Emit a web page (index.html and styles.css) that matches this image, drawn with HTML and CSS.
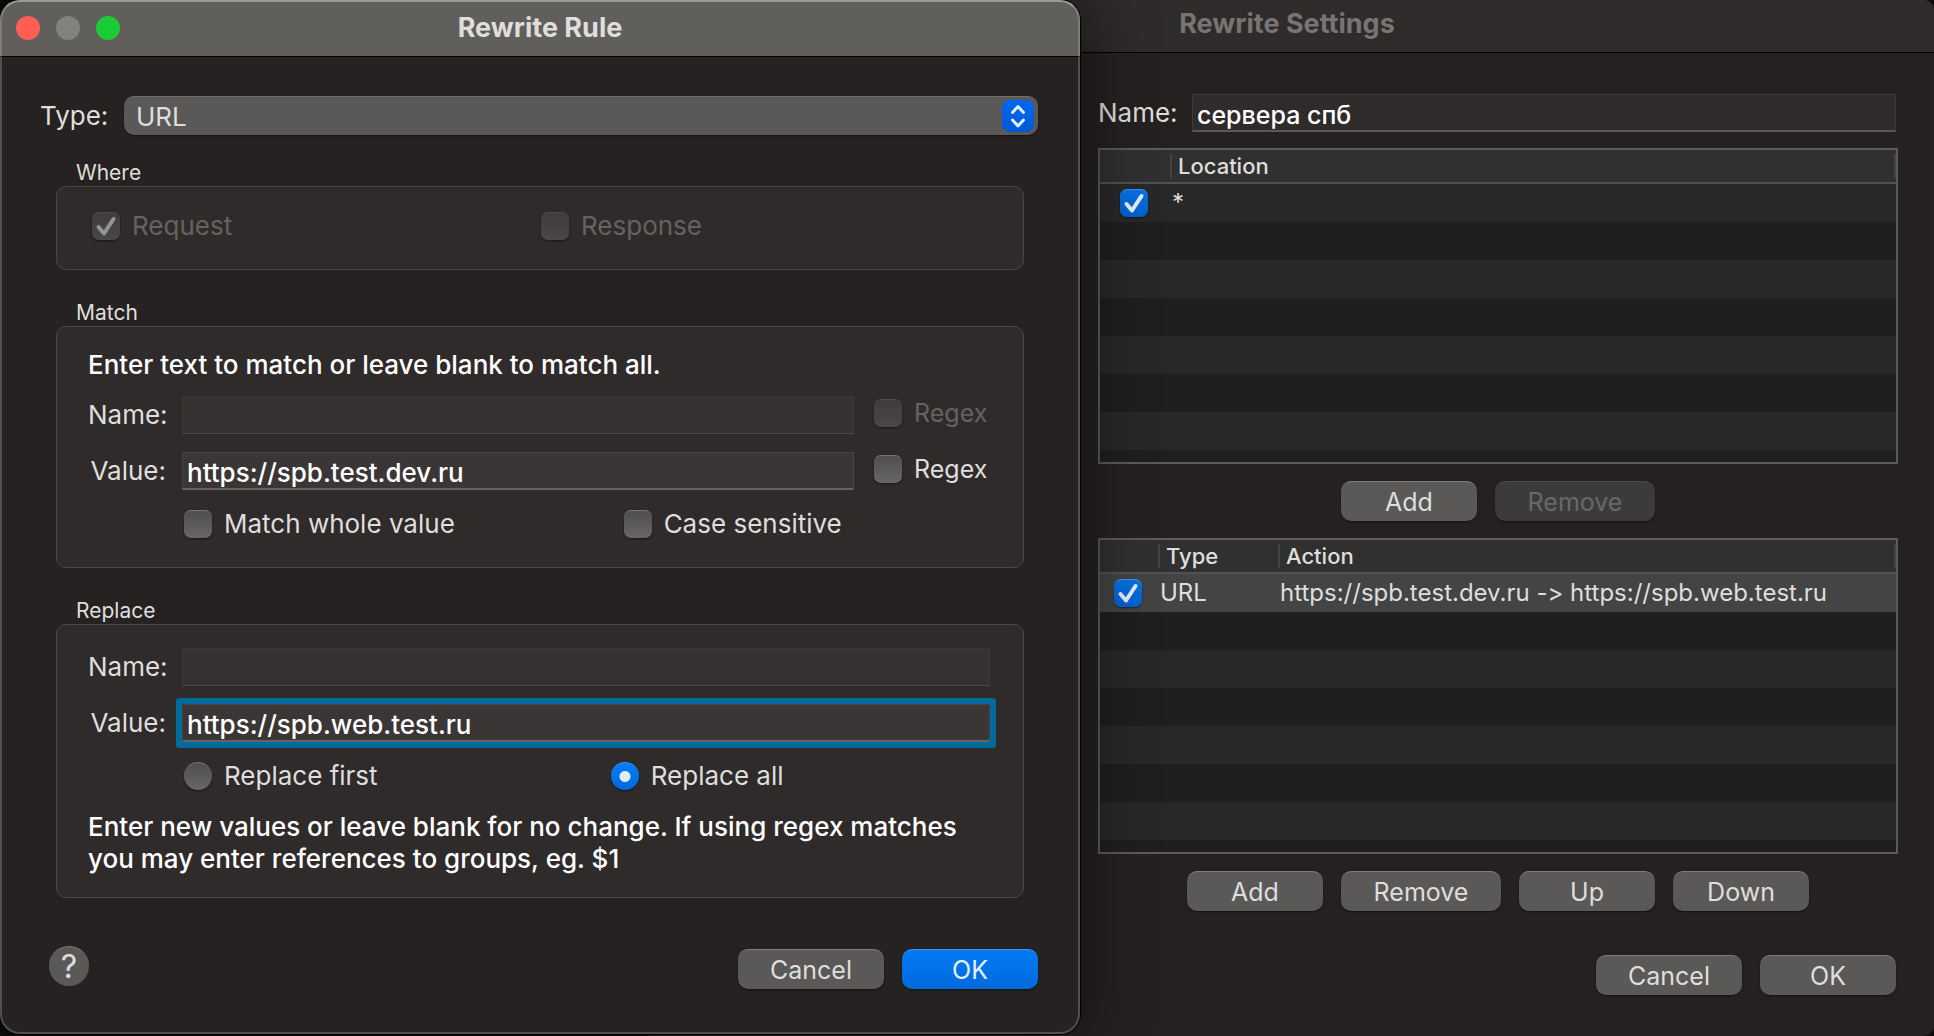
FILE: index.html
```html
<!DOCTYPE html>
<html lang="en">
<head>
<meta charset="utf-8">
<title>Rewrite Settings</title>
<link rel="stylesheet" href="styles.css">
</head>
<body>
<main class="desktop">
  <section class="window dialog" aria-labelledby="rule-title">
    <header class="titlebar">
      <div class="lights">
        <button class="light close" type="button" aria-label="Close"></button>
        <button class="light minimize" type="button" aria-label="Minimize" disabled></button>
        <button class="light zoom" type="button" aria-label="Zoom"></button>
      </div>
      <h1 class="title" id="rule-title">Rewrite Rule</h1>
    </header>
    <form class="dialog-body">
      <div class="type-row">
        <label for="type">Type:</label>
        <div class="popup">
          <select id="type"><option>URL</option></select>
          <span class="stepper"><svg viewBox="0 0 32 32" aria-hidden="true"><path d="M10.500 12.500 16 6.500 21.500 12.500M10.500 20 16 26 21.500 20"/></svg></span>
        </div>
      </div>

      <fieldset class="group">
        <legend>Where</legend>
        <div class="panel where">
          <label class="option off"><span class="tick"><input type="checkbox" checked disabled><svg viewBox="0 0 28 28" aria-hidden="true"><path d="M6.500 15 12 21.500 21.500 7"/></svg></span>Request</label>
          <label class="option off"><span class="tick"><input type="checkbox" disabled></span>Response</label>
        </div>
      </fieldset>

      <fieldset class="group">
        <legend>Match</legend>
        <div class="panel match">
          <p class="hint">Enter text to match or leave blank to match all.</p>
          <div class="fields with-regex">
            <label for="match-name">Name:</label>
            <input class="field" id="match-name" type="text" disabled>
            <label class="option off"><span class="tick"><input type="checkbox" disabled></span>Regex</label>
            <label for="match-value">Value:</label>
            <input class="field" id="match-value" type="text" value="https://spb.test.dev.ru">
            <label class="option"><span class="tick"><input type="checkbox"></span>Regex</label>
            <div class="options match-options">
              <label class="option"><span class="tick"><input type="checkbox"></span>Match whole value</label>
              <label class="option"><span class="tick"><input type="checkbox"></span>Case sensitive</label>
            </div>
          </div>
        </div>
      </fieldset>

      <fieldset class="group">
        <legend>Replace</legend>
        <div class="panel replace">
          <div class="fields">
            <label for="replace-name">Name:</label>
            <input class="field" id="replace-name" type="text" disabled>
            <label for="replace-value">Value:</label>
            <input class="field current" id="replace-value" type="text" value="https://spb.web.test.ru">
            <div class="options replace-options">
              <label class="option"><input type="radio" name="scope">Replace first</label>
              <label class="option"><input type="radio" name="scope" checked>Replace all</label>
            </div>
          </div>
          <p class="hint">Enter new values or leave blank for no change. If using regex matches<br>you may enter references to groups, eg. $1</p>
        </div>
      </fieldset>

      <footer class="dialog-footer">
        <button class="help" type="button" aria-label="Help">?</button>
        <button class="button wide" type="button">Cancel</button>
        <button class="button primary" type="button">OK</button>
      </footer>
    </form>
  </section>

  <section class="window settings" aria-labelledby="settings-title">
    <header class="titlebar">
      <h2 class="title" id="settings-title">Rewrite Settings</h2>
    </header>
    <div class="settings-body">
      <div class="name-row">
        <label for="set-name">Name:</label>
        <input class="field" id="set-name" type="text" value="сервера спб">
      </div>
      <div class="list">
        <table>
          <colgroup><col class="c-tick-wide"><col></colgroup>
          <thead><tr><th><span></span></th><th><span>Location</span></th></tr></thead>
          <tbody><tr><td class="tick-cell"><span class="tick"><input type="checkbox" checked aria-label="Enable location"><svg viewBox="0 0 28 28" aria-hidden="true"><path d="M6.500 15 12 21.500 21.500 7"/></svg></span></td><td>*</td></tr></tbody>
        </table>
      </div>
      <div class="buttons">
        <button class="button" type="button">Add</button>
        <button class="button wider" type="button" disabled>Remove</button>
      </div>
      <div class="list">
        <table>
          <colgroup><col class="c-tick"><col class="c-type"><col></colgroup>
          <thead><tr><th><span></span></th><th><span>Type</span></th><th><span>Action</span></th></tr></thead>
          <tbody><tr class="selected"><td class="tick-cell"><span class="tick"><input type="checkbox" checked aria-label="Enable rule"><svg viewBox="0 0 28 28" aria-hidden="true"><path d="M6.500 15 12 21.500 21.500 7"/></svg></span></td><td>URL</td><td>https://spb.test.dev.ru -&gt; https://spb.web.test.ru</td></tr></tbody>
        </table>
      </div>
      <div class="buttons">
        <button class="button" type="button">Add</button>
        <button class="button wider" type="button">Remove</button>
        <button class="button" type="button">Up</button>
        <button class="button" type="button">Down</button>
      </div>
      <footer class="settings-footer">
        <button class="button wide" type="button">Cancel</button>
        <button class="button" type="button">OK</button>
      </footer>
    </div>
  </section>
</main>
</body>
</html>
```

FILE: styles.css
```css
* { box-sizing: border-box; }

body {
  margin: 0;
  background: #0c0c0c;
  color: #dfdedd;
  font: 400 26px/32px Inter, "Liberation Sans", sans-serif;
  font-variant-ligatures: none;
}

button, input, select { font: inherit; color: inherit; margin: 0; }
h1, h2, p { margin: 0; }

.desktop {
  display: grid;
  grid-template-columns: 1080fr 854fr;
  min-height: 100vh;
  overflow: hidden;
}

/* Windows */
.window {
  display: flex;
  flex-direction: column;
  position: relative;
  border-radius: 20px;
  background: #262221;
}

.titlebar {
  display: grid;
  align-items: center;
  border-bottom: 1px solid #000;
  border-radius: 20px 20px 0 0;
}

.titlebar > * { grid-area: 1 / 1; }

.title {
  justify-self: center;
  font-size: 27px;
  font-weight: 700;
}

.dialog {
  z-index: 1;
  margin-bottom: 2px;
  box-shadow: 0 0 0 1px #000, 0 0 70px rgba(0, 0, 0, .65);
}

.dialog::after {
  content: "";
  position: absolute;
  inset: 0;
  border: 2px solid rgba(255, 255, 255, .2);
  border-top-color: rgba(255, 255, 255, .36);
  border-radius: inherit;
  pointer-events: none;
}

.dialog .titlebar {
  height: 57px;
  padding: 0 16px 1px;
  background: #605f5c;
}

.lights { display: flex; gap: 16px; }

.light {
  width: 24px;
  height: 24px;
  padding: 0;
  border: 0;
  border-radius: 50%;
}

.close { background: #ff5f52; }
.minimize { background: #82817e; }
.zoom { background: #19cc35; }

/* Rule form */
.dialog-body {
  display: flex;
  flex-direction: column;
  flex: 1;
  padding: 39px 42px 45px 40px;
}

.type-row { display: flex; align-items: center; gap: 16px; margin-bottom: 23px; }
.type-row label { width: 68px; }

.popup { display: grid; flex: 1; align-items: center; }
.popup > * { grid-area: 1 / 1; }

.popup select {
  appearance: none;
  width: 100%;
  height: 39px;
  padding: 1px 48px 0 12px;
  border: 0;
  border-top: 1px solid #706f6d;
  border-radius: 10px;
  background: #5a5957;
  box-shadow: 0 1px 2px rgba(0, 0, 0, .5);
}

.stepper {
  justify-self: end;
  width: 32px;
  height: 32px;
  margin-right: 4px;
  border-radius: 8px;
  background: linear-gradient(#0267ef, #0159d6);
  pointer-events: none;
}

svg { display: block; width: 100%; height: 100%; }

path {
  fill: none;
  stroke: #e4edfb;
  stroke-width: 3;
  stroke-linecap: round;
  stroke-linejoin: round;
}

.group {
  min-width: 0;
  margin: 0 14px 28px 16px;
  padding: 0;
  border: 0;
}

.group legend {
  padding: 2px 20px 0;
  font-size: 21px;
  line-height: 26px;
}

.panel {
  padding: 23px 33px 22px 31px;
  border: 1px solid #4a4746;
  border-radius: 10px;
  background: #2f2b2a;
}

.where {
  display: grid;
  grid-template-columns: 1fr 1fr;
  padding-left: 35px;
  padding-bottom: 27px;
}

.match { padding-bottom: 27px; padding-top: 22px; }
.match .hint { margin-bottom: 15px; }
.replace .hint { margin-top: 19px; }
.hint { color: #fff; font-weight: 500; }

.fields {
  display: grid;
  grid-template-columns: 78px 1fr;
  align-items: center;
  gap: 18px 16px;
}

.with-regex { grid-template-columns: 78px 1fr 120px; }
.fields > label:not(.option) { text-align: right; }
.fields > .option { margin: 0 0 4px 4px; font-size: 25px; }

.field {
  min-width: 0;
  width: 100%;
  height: 38px;
  padding: 4px 4px 0;
  border: 1px solid #474443;
  border-bottom: 2px solid #666463;
  border-radius: 0;
  background: #3a3635;
  color: #fff;
  font-weight: 500;
}

.field:disabled { background: #353130; border-color: #3b3736; border-bottom: 1px solid #4a4746; }
.field:focus { outline: none; }
.current, .field:focus { box-shadow: 0 0 0 6px #006b9c; border-radius: 1px; }

.options { display: grid; grid-column: 2 / -1; padding-left: 2px; }
.match-options { grid-template-columns: 6fr 5fr; }
.replace-options { grid-template-columns: 9fr 8fr; }

.option { display: flex; align-items: center; gap: 12px; }
.off { color: #656261; }

.tick { display: inline-grid; width: 28px; height: 28px; }
.tick > * { grid-area: 1 / 1; }
.tick svg { pointer-events: none; }
.tick path { stroke-width: 4; }
.off path { stroke: #969493; }

input[type="checkbox"], input[type="radio"] {
  appearance: none;
  width: 28px;
  height: 28px;
  border-top: 1px solid #7a7876;
  border-radius: 7px;
  background: linear-gradient(#4f4e4c, #686765);
  box-shadow: 0 1px 2px rgba(0, 0, 0, .5);
}

input[type="radio"] { border-radius: 50%; }

input[type="checkbox"]:checked { border-color: #3d93f5; background: linear-gradient(#0573e6, #0261cb); }

input[type="radio"]:checked {
  border-color: #3d93f5;
  background: radial-gradient(circle, #dfecfc 5px, transparent 6px), linear-gradient(#047df5, #0268dc);
}

input[type="checkbox"]:disabled { border-color: #504d4c; background: linear-gradient(#3f3c3b, #4a4847); }

.dialog-footer { display: flex; align-items: flex-end; gap: 18px; margin-top: 20px; }

/* Buttons */
.button {
  width: 136px;
  height: 40px;
  padding: 0;
  border: 0;
  border-top: 1px solid #7e7d7b;
  border-radius: 10px;
  background: #5a5957;
  box-shadow: 0 1px 2px rgba(0, 0, 0, .5);
  font-size: 25px;
}

.wide { width: 146px; }
.wider { width: 160px; }
.button:disabled { border-color: #4c4b49; background: #3d3b3a; color: #6a6867; }
.primary { border-color: #3a97fb; background: linear-gradient(#037af3, #016adc); color: #e6f0fd; }

.help {
  width: 40px;
  height: 40px;
  margin: 0 auto 3px 9px;
  padding: 0;
  border: 0;
  border-top: 1px solid #7e7d7b;
  border-radius: 50%;
  background: #5a5957;
  font-size: 32px;
}

/* Settings window, partly behind the rule dialog */
.settings { margin-left: -440px; border-radius: 10px; background: #252120; }
.settings .titlebar { height: 53px; padding-bottom: 5px; border-radius: 10px 10px 0 0; background: #2f2b2a; }
.settings .title { color: #777473; }

.settings-body {
  display: flex;
  flex-direction: column;
  flex: 1;
  padding: 41px 36px 41px 458px;
}

.name-row { display: flex; align-items: center; gap: 16px; margin: 0 2px 16px 0; }
.name-row label { width: 78px; }

.name-row .field {
  flex: 1;
  border-color: #3e3b3a;
  border-bottom: 2px solid #5a5857;
  background: #2f2b2a;
  font-size: 25px;
}

.list {
  flex: 1 1 0;
  min-height: 116px;
  overflow: hidden;
  border: 2px solid #5b5b5b;
  background: linear-gradient(#282828 50%, #1f1f1f 50%) 0 34px / 100% 76px;
}

table { width: 100%; border-collapse: separate; border-spacing: 0; table-layout: fixed; }
.c-tick { width: 60px; }
.c-tick-wide { width: 72px; }
.c-type { width: 120px; }

th {
  height: 34px;
  padding: 0;
  border-bottom: 2px solid #525252;
  background: #303030;
  font-size: 22px;
  font-weight: 500;
  text-align: left;
}

th span {
  display: block;
  height: 24px;
  padding-left: 6px;
  border-right: 2px solid #444;
  line-height: 24px;
}

td { height: 38px; padding: 0; font-size: 24px; white-space: nowrap; }
td.tick-cell { padding: 0 4px 0 0; text-align: center; line-height: 0; }
.selected { background: #444; }

.buttons { display: flex; justify-content: center; gap: 18px; margin: 17px 0; }
.settings-footer { display: flex; justify-content: flex-end; gap: 18px; margin: 27px 2px 0 0; }
```
